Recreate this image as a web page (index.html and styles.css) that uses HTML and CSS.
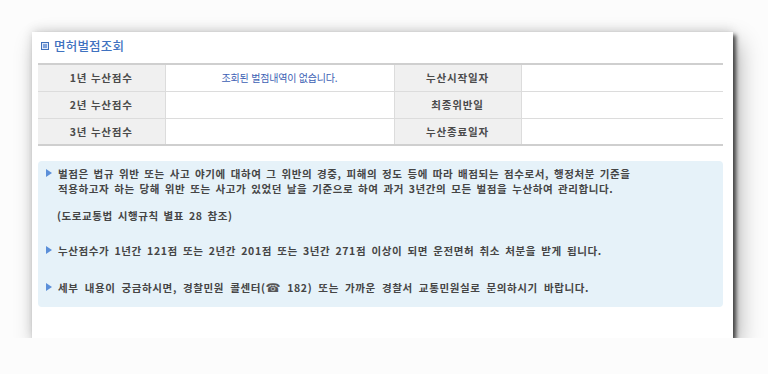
FILE: index.html
```html
<!DOCTYPE html>
<html lang="ko">
<head>
  <meta charset="UTF-8" />
  <title>면허벌점조회</title>
  <link rel="stylesheet" href="styles.css">
</head>
<body>
  <div class="card">
    <div class="title">
      <span class="title-icon"></span>
      <h2>면허벌점조회</h2>
    </div>

    <table class="score-table">
      <tbody>
        <tr>
          <th>1년 누산점수</th>
          <td class="empty-msg">조회된 벌점내역이 없습니다.</td>
          <th>누산시작일자</th>
          <td></td>
        </tr>
        <tr>
          <th>2년 누산점수</th>
          <td></td>
          <th>최종위반일</th>
          <td></td>
        </tr>
        <tr>
          <th>3년 누산점수</th>
          <td></td>
          <th>누산종료일자</th>
          <td></td>
        </tr>
      </tbody>
    </table>

    <div class="info-box">
      <div class="info-item">
        <span class="bullet"></span>
        <p>벌점은 법규 위반 또는 사고 야기에 대하여 그 위반의 경중, 피해의 정도 등에 따라 배점되는 점수로서, 행정처분 기준을<br>적용하고자 하는 당해 위반 또는 사고가 있었던 날을 기준으로 하여 과거 3년간의 모든 벌점을 누산하여 관리합니다.</p>
      </div>
      <p class="note">(도로교통법 시행규칙 별표 28 참조)</p>
      <div class="info-item item-2">
        <span class="bullet"></span>
        <p>누산점수가 1년간 121점 또는 2년간 201점 또는 3년간 271점 이상이 되면 운전면허 취소 처분을 받게 됩니다.</p>
      </div>
      <div class="info-item item-3">
        <span class="bullet"></span>
        <p>세부 내용이 궁금하시면, 경찰민원 콜센터(<span class="tel">☎</span> 182) 또는 가까운 경찰서 교통민원실로 문의하시기 바랍니다.</p>
      </div>
    </div>
  </div>
</body>
</html>
```

FILE: styles.css
```css
* {
  margin: 0;
  padding: 0;
  box-sizing: border-box;
  font-family: 'Noto Sans CJK KR', 'Noto Sans', sans-serif;
}

html, body {
  background: #fcfcfc;
}

body {
  padding: 32px 0 0 32px;
}

.card {
  width: 701px;
  height: 306px;
  background: #fff;
  padding: 0 10px 0 6px;
  box-shadow: 3px 3px 4px rgba(0,0,0,0.65), 6px 10px 22px rgba(0,0,0,0.3), 0 -2px 10px rgba(0,0,0,0.12);
}

/* Title */
.title {
  height: 31px;
  padding: 0 0 3px 3px;
  display: flex;
  align-items: center;
  gap: 5px;
}

.title-icon {
  width: 8px;
  height: 8px;
  border: 1px solid #3f6fba;
  background: #7fa2da;
  box-shadow: inset 0 0 0 1px #dfe8f8;
}

.title h2 {
  font-size: 12.5px;
  font-weight: 500;
  color: #3f72c0;
  line-height: 14px;
  letter-spacing: 0.2px;
}

/* Score table */
.score-table {
  width: 100%;
  border-collapse: collapse;
  border-top: 2px solid #cfcfcf;
  border-bottom: 2px solid #cfcfcf;
}

.score-table th,
.score-table td {
  height: 27px;
  border-bottom: 1px solid #dcdcdc;
  border-left: 1px solid #dcdcdc;
  font-size: 10.5px;
}

.score-table tr:last-child th,
.score-table tr:last-child td {
  border-bottom: none;
}

.score-table th {
  width: 127px;
  background: #f0f0f0;
  color: #4a4a4a;
  font-weight: 700;
  letter-spacing: 0.8px;
  text-align: center;
}

.score-table tr th:first-child {
  border-left: none;
}

.score-table td {
  background: #fff;
}

.score-table td.empty-msg {
  width: 229px;
  text-align: center;
  color: #3d5fb4;
  font-size: 10px;
  letter-spacing: -0.2px;
}

/* Info box */
.info-box {
  margin-top: 15px;
  background: #e6f2f9;
  border-radius: 4px;
  padding: 5px 10px 12px 8px;
  height: 146px;
}

.info-item {
  display: flex;
  align-items: flex-start;
  gap: 6px;
}

.info-item p,
.note {
  font-size: 10.5px;
  font-weight: 700;
  color: #454545;
  line-height: 15px;
  letter-spacing: 0.6px;
  word-spacing: 1.3px;
}

.bullet {
  flex: none;
  margin-top: 3px;
  width: 0;
  height: 0;
  border-top: 4px solid transparent;
  border-bottom: 4px solid transparent;
  border-left: 6px solid #5b8fd9;
}

.note {
  margin: 12px 0 0 11px;
}

.item-2 {
  margin-top: 20px;
}

.item-2 p {
  word-spacing: 1.7px;
}

.item-3 {
  margin-top: 22px;
}

.item-3 p {
  word-spacing: 2.6px;
}

.tel {
  font-size: 12px;
  font-family: 'DejaVu Sans', sans-serif;
  color: #555;
}
```
